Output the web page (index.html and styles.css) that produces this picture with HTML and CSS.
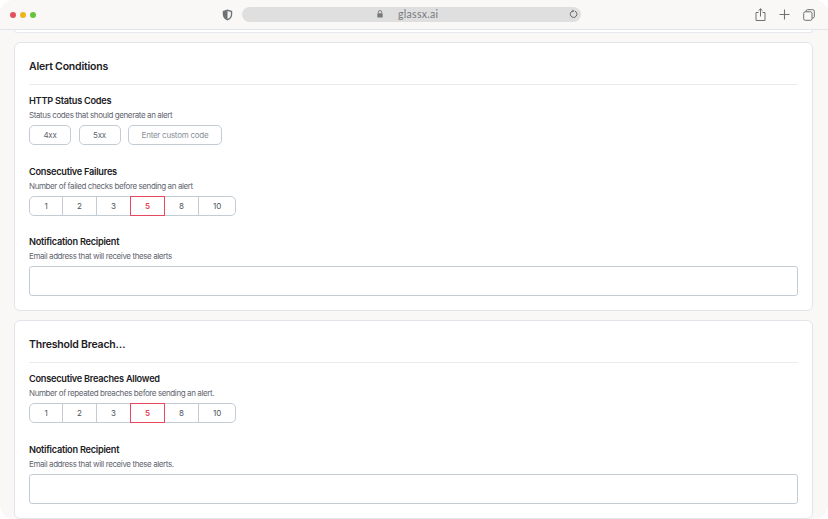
FILE: index.html
```html
<!DOCTYPE html>
<html lang="en">
<head>
    <meta charset="UTF-8">
    <meta name="viewport" content="width=device-width, initial-scale=1.0">
    <title>glassx.ai - Alerts</title>
    <link rel="stylesheet" href="styles.css">
</head>
<body>
    <div class="window">
        <div class="toolbar">
            <div class="traffic">
                <span class="dot red"></span>
                <span class="dot yellow"></span>
                <span class="dot green"></span>
            </div>
            <svg class="shield" width="11" height="12" viewBox="0 0 11 12">
                <path d="M5.5 .6 10.2 2v3.6c0 2.9-2 4.9-4.7 5.8C2.800 10.500 .8 8.500 .8 5.600V2z" fill="#6f7274"/>
                <path d="M5.500 2 8.900 3v2.600c0 2.100-1.400 3.600-3.400 4.400z" fill="#f3f3f2"/>
            </svg>
            <div class="address">
                <svg class="lock" width="6" height="8" viewBox="0 0 6 8">
                    <path d="M1.300 3.500V2.200a1.700 1.700 0 0 1 3.400 0v1.300" fill="none" stroke="#77797b" stroke-width=".9"/>
                    <rect x=".3" y="3.300" width="5.400" height="4.300" rx=".7" fill="#77797b"/>
                </svg>
                <span class="url">glassx.ai</span>
                <svg class="reload" width="9" height="10" viewBox="0 0 9 10">
                    <path d="M5.900 2.100a3.300 3.300 0 1 1-2.600 0" fill="none" stroke="#66686a" stroke-width="1"/>
                    <path d="M3.300 .5 5.400 2.100 3.300 3.600z" fill="#66686a"/>
                </svg>
            </div>
            <div class="actions">
                <svg width="11" height="13" viewBox="0 0 11 13">
                    <path d="M3.500 4.500H1v8h9v-8H7.500M5.500 8.500V.8M3.500 2.700 5.500 .8l2 1.900" fill="none" stroke="#6f7274" stroke-width="1"/>
                </svg>
                <svg width="11" height="11" viewBox="0 0 11 11">
                    <path d="M5.500 .5v10M.5 5.500h10" fill="none" stroke="#6f7274" stroke-width="1.100"/>
                </svg>
                <svg width="12" height="12" viewBox="0 0 12 12">
                    <rect x="3" y=".7" width="8.300" height="8.300" rx="1.500" fill="none" stroke="#6f7274" stroke-width="1"/>
                    <rect x=".7" y="2.800" width="8.300" height="8.500" rx="1.500" fill="#f9f8f6" stroke="#6f7274" stroke-width="1"/>
                </svg>
            </div>
        </div>

        <div class="content">
            <div class="prev-card"></div>

            <section class="card">
                <h2 class="card-title">Alert Conditions</h2>

                <div class="field">
                    <h3>HTTP Status Codes</h3>
                    <p>Status codes that should generate an alert</p>
                    <div class="chips">
                        <button class="chip chip-code">4xx</button>
                        <button class="chip chip-code">5xx</button>
                        <input class="chip chip-input" type="text" placeholder="Enter custom code">
                    </div>
                </div>

                <div class="field">
                    <h3>Consecutive Failures</h3>
                    <p>Number of failed checks before sending an alert</p>
                    <div class="segments">
                        <button class="seg">1</button>
                        <button class="seg">2</button>
                        <button class="seg">3</button>
                        <button class="seg active">5</button>
                        <button class="seg">8</button>
                        <button class="seg seg-wide">10</button>
                    </div>
                </div>

                <div class="field">
                    <h3>Notification Recipient</h3>
                    <p>Email address that will receive these alerts</p>
                    <input class="text-input" type="text">
                </div>
            </section>

            <section class="card card-last">
                <h2 class="card-title">Threshold Breach…</h2>

                <div class="field">
                    <h3>Consecutive Breaches Allowed</h3>
                    <p>Number of repeated breaches before sending an alert.</p>
                    <div class="segments">
                        <button class="seg">1</button>
                        <button class="seg">2</button>
                        <button class="seg">3</button>
                        <button class="seg active">5</button>
                        <button class="seg">8</button>
                        <button class="seg seg-wide">10</button>
                    </div>
                </div>

                <div class="field">
                    <h3>Notification Recipient</h3>
                    <p>Email address that will receive these alerts.</p>
                    <input class="text-input" type="text">
                </div>
            </section>
        </div>
    </div>
</body>
</html>
```

FILE: styles.css
```css
* {
    margin: 0;
    padding: 0;
    box-sizing: border-box;
}

body {
    background: white;
    font-family: Inter, 'Liberation Sans', sans-serif;
    overflow: hidden;
}

.window {
    width: 828px;
    height: 519px;
    background: #f9f8f6;
    border-radius: 14px;
    overflow: hidden;
}

.toolbar {
    height: 30px;
    display: flex;
    align-items: center;
    padding-left: 10px;
    background: #f9f8f6;
    border-bottom: 1px solid #e1e6ec;
}

.traffic {
    display: flex;
    gap: 4px;
    width: 212px;
}

.dot {
    width: 6px;
    height: 6px;
    border-radius: 50%;
}

.red { background: #e5505c; }
.yellow { background: #eeb420; }
.green { background: #69c23f; }

.shield {
    margin-right: 9px;
}

.address {
    width: 339px;
    height: 15px;
    margin-top: -1px;
    display: flex;
    align-items: center;
    padding: 0 3px 0 135px;
    background: #dfdfdf;
    border-radius: 8px;
}

.url {
    margin-left: 15px;
    font-family: Lato, 'Open Sans', sans-serif;
    font-size: 10.5px;
    color: #77797b;
    letter-spacing: .3px;
}

.reload {
    margin-left: auto;
}

.actions {
    margin-left: 174px;
    display: flex;
    align-items: center;
    gap: 13px;
}

.content {
    padding: 0 15px 0 14px;
}

.prev-card {
    height: 3px;
    background: white;
    border: 1px solid #e6e9ee;
    border-top: none;
    border-radius: 0 0 5px 5px;
    margin-bottom: 9px;
}

.card {
    height: 269px;
    padding: 14px 14px 0;
    margin-bottom: 9px;
    background: white;
    border: 1px solid #e1e5ea;
    border-radius: 6px;
}

.card-last {
    height: 199px;
}

.card-title {
    height: 28px;
    padding-top: 1px;
    margin-bottom: 9px;
    border-bottom: 1px solid #e9ebee;
    font-size: 10.5px;
    line-height: 17px;
    font-weight: 600;
    letter-spacing: -.2px;
    color: #1c2024;
}

.field {
    margin-bottom: 19.5px;
}

.field h3 {
    font-size: 9.2px;
    line-height: 14px;
    font-weight: 600;
    letter-spacing: -.25px;
    color: #1c2024;
}

.field p {
    font-size: 8px;
    line-height: 14px;
    letter-spacing: -.4px;
    color: #5f6670;
}

.chips {
    display: flex;
    gap: 7.5px;
    margin-top: 3px;
}

.chip {
    height: 20px;
    background: white;
    border: 1px solid #c3cbd5;
    border-radius: 5px;
    font-family: inherit;
    font-size: 8px;
    letter-spacing: -.25px;
    color: #5f6670;
    text-align: center;
}

.chip-code {
    width: 42px;
}

.chip-input {
    width: 94px;
}

.chip-input::placeholder {
    color: #8a9099;
}

.segments {
    display: flex;
    width: 207px;
    height: 20px;
    margin-top: 3px;
    border: 1px solid #c3cbd5;
    border-radius: 5px;
}

.seg {
    flex: 34 0 0;
    background: none;
    border: none;
    border-right: 1px solid #c3cbd5;
    font-family: inherit;
    font-size: 8px;
    color: #4c525a;
}

.seg:first-child {
    flex: 33 0 0;
}

.seg-wide {
    flex: 37 0 0;
    border-right: none;
}

.seg.active {
    margin: -1px 0 -1px -1px;
    height: 20px;
    border: 1px solid #e8475f;
    font-weight: 600;
    color: #e5425a;
}

.text-input {
    display: block;
    width: 100%;
    height: 30px;
    margin-top: 3px;
    background: white;
    border: 1px solid #c3cbd5;
    border-radius: 3px;
}
```
